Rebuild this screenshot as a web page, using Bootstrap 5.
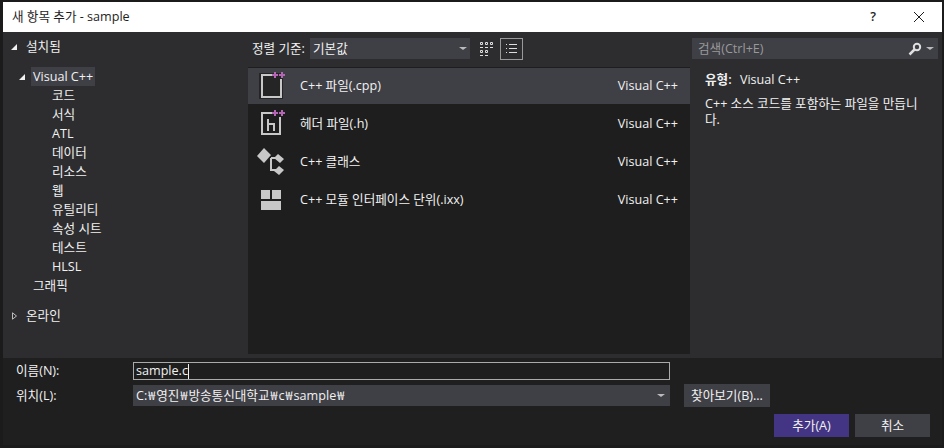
<!DOCTYPE html>
<html lang="ko">
<head>
    <meta charset="UTF-8">
    <title>새 항목 추가 - sample</title>
    <link href="https://cdn.jsdelivr.net/npm/bootstrap@5.3.0/dist/css/bootstrap.min.css" rel="stylesheet">
    <style>
        html, body { height: 448px; overflow: hidden; }
        body {
            background: #1b1b1c;
            color: #f1f1f1;
            font-family: "Open Sans", "Noto Sans CJK KR", sans-serif;
            font-size: 12.6px;
            line-height: 16px;
        }
        .dlg { width: 944px; height: 448px; padding: 2px 2px 3px 3px; }
        .title-strip { height: 30px; background: #fff; color: #1e1e1e; padding: 0 0 0 9px; }
        .title-btn { width: 46px; text-align: center; }
        .dlg-body { height: 326px; background: #2d2d30; }
        .side-pane { width: 245px; padding-top: 5px; }
        .mid-pane { width: 442px; }
        .info-pane { width: 252px; }
        .tree-head { height: 19px; padding-left: 7px; gap: 8px; }
        .tree-arrow { width: 8px; height: 8px; flex: none; }
        .tree-vc { padding-left: 15px; margin-top: 11px; margin-bottom: 2px; }
        .tree-sel { background: #3f3f46; padding: 0 2px; height: 19px; margin-left: 5px; }
        .tree-leaf { height: 19px; padding-left: 49px; }
        .tree-gfx { padding-left: 30px; }
        .tree-online { margin-top: 9px; }
        .sort-bar { height: 35px; padding: 6px 0 0 4px; }
        .sort-label { width: 58px; line-height: 21px; }
        .sort-select { width: 160px; height: 21px; background: #3f3f46; padding: 0 3px; }
        .caret-down { width: 0; height: 0; border-left: 4px solid transparent; border-right: 4px solid transparent; border-top: 3px solid #bbb; }
        .view-grid { width: 14px; height: 14px; margin: 4px 6px 0 10px; }
        .view-list { width: 23px; height: 22px; border: 1px solid #999; }
        .tpl-list { height: 287px; background: #1e1e1e; padding-top: 1px; }
        .tpl-row { height: 36px; margin-bottom: 2px; padding: 0 12px 0 9px; }
        .tpl-row.on { background: #3f3f46; }
        .tpl-ico { width: 28px; height: 28px; flex: none; margin-right: 15px; overflow: visible; }
        .search-box { height: 21px; background: #3f3f46; margin: 6px 4px 0 2px; color: #999; padding: 0 4px 0 6px; }
        .info-text { padding: 13px 10px 0 15px; }
        .info-text b { font-weight: 600; margin-right: 5px; }
        .foot { height: 87px; background: #1f1f1f; padding: 4px 12px 0 13px; }
        .foot-label { width: 117px; flex: none; }
        .name-input { width: 537px; height: 18px; border: 1px solid #aaa; background: #1e1e1e; padding: 0 2px; }
        .caret-bar { width: 1px; height: 15px; background: #f1f1f1; }
        .loc-row { margin-top: 4px; }
        .loc-input { width: 537px; height: 21px; background: #3f3f46; padding: 0 5px 0 3px; }
        .won { font-family: "Noto Sans CJK KR", sans-serif; margin: 0 1px; }
        .dlg-btn { background: #3f3f46; color: #f1f1f1; border: 0; border-radius: 0; font-size: 12.6px; line-height: 16px; padding: 0; }
        .dlg-btn.browse { width: 86px; height: 23px; margin-left: 14px; }
        .dlg-btn.wide { width: 75px; height: 23px; }
        .dlg-btn.primary-btn { background: #433584; }
        .btn-row { margin-top: 7px; gap: 6px; }
    </style>
</head>
<body>
<div class="dlg d-flex flex-column">
    <div class="title-strip d-flex align-items-center justify-content-between">
        <span>새 항목 추가 - sample</span>
        <div class="d-flex align-items-center">
            <span class="title-btn fw-semibold">?</span>
            <span class="title-btn d-flex justify-content-center">
                <svg width="12" height="12" viewBox="0 0 12 12"><path d="M1 1l10 10M11 1L1 11" stroke="#1e1e1e" fill="none"/></svg>
            </span>
        </div>
    </div>

    <div class="dlg-body d-flex">
        <div class="side-pane">
            <div class="tree-head d-flex align-items-center">
                <svg class="tree-arrow" viewBox="0 0 8 8"><path d="M7 1v6H1z" fill="#f1f1f1"/></svg>
                <span>설치됨</span>
            </div>
            <div class="tree-vc d-flex align-items-center">
                <svg class="tree-arrow" viewBox="0 0 8 8"><path d="M7 1v6H1z" fill="#f1f1f1"/></svg>
                <span class="tree-sel d-flex align-items-center">Visual C++</span>
            </div>
            <div class="tree-leaf">코드</div>
            <div class="tree-leaf">서식</div>
            <div class="tree-leaf">ATL</div>
            <div class="tree-leaf">데이터</div>
            <div class="tree-leaf">리소스</div>
            <div class="tree-leaf">웹</div>
            <div class="tree-leaf">유틸리티</div>
            <div class="tree-leaf">속성 시트</div>
            <div class="tree-leaf">테스트</div>
            <div class="tree-leaf">HLSL</div>
            <div class="tree-leaf tree-gfx">그래픽</div>
            <div class="tree-head tree-online d-flex align-items-center">
                <svg class="tree-arrow" viewBox="0 0 8 10" preserveAspectRatio="none"><path d="M2.5 1l4 4-4 4z" fill="none" stroke="#ccc"/></svg>
                <span>온라인</span>
            </div>
        </div>

        <div class="mid-pane d-flex flex-column">
            <div class="sort-bar d-flex align-items-start">
                <span class="sort-label">정렬 기준:</span>
                <div class="sort-select d-flex align-items-center justify-content-between">
                    <span>기본값</span>
                    <span class="caret-down"></span>
                </div>
                <svg class="view-grid" viewBox="0 0 14 14" fill="none" stroke="#ddd"><path d="M.5.5h2v2h-2zM5.5.5h2v2h-2zM10.5.5h2v2h-2zM0 5.5h3M5 5.5h3M10 5.5h3M.5 8.5h2v2h-2zM5.5 8.5h2v2h-2zM0 13.5h3M5 13.5h3"/></svg>
                <div class="view-list d-flex align-items-center justify-content-center">
                    <svg width="12" height="12" viewBox="0 0 12 12" fill="none" stroke="#ddd"><path d="M0 1.5h1M3 1.5h8M0 5.5h1M3 5.5h8M0 9.5h1M3 9.5h8"/></svg>
                </div>
            </div>
            <div class="tpl-list">
                <div class="tpl-row on d-flex align-items-center">
                    <svg class="tpl-ico" viewBox="0 0 28 28">
                        <path d="M2 1h24v26H2z" fill="#252526"/>
                        <path d="M15 3H5v22h19V7" fill="none" stroke="#c8c8c8" stroke-width="2"/>
                        <path d="M15 3h6M18 0v6M22 3h6M25 0v6" stroke="#b566b5" stroke-width="2"/>
                    </svg>
                    <span>C++ 파일(.cpp)</span>
                    <span class="ms-auto">Visual C++</span>
                </div>
                <div class="tpl-row d-flex align-items-center">
                    <svg class="tpl-ico" viewBox="0 0 28 28">
                        <path d="M15 3H5v21h18V7" fill="none" stroke="#c8c8c8" stroke-width="2"/>
                        <path d="M11 9v12M11 14h6v7" fill="none" stroke="#c8c8c8" stroke-width="2"/>
                        <path d="M15 3h6M18 0v6M22 3h6M25 0v6" stroke="#b566b5" stroke-width="2"/>
                    </svg>
                    <span>헤더 파일(.h)</span>
                    <span class="ms-auto">Visual C++</span>
                </div>
                <div class="tpl-row d-flex align-items-center">
                    <svg class="tpl-ico" viewBox="0 0 28 28">
                        <path d="M0 8l7-8 7 7-7 8zM17 10l4-4 6 5-4 4zM17 23l5-5 5 4-5 5z" fill="#c8c8c8"/>
                        <path d="M14 10v12h5M14 10h6" fill="none" stroke="#c8c8c8" stroke-width="2"/>
                    </svg>
                    <span>C++ 클래스</span>
                    <span class="ms-auto">Visual C++</span>
                </div>
                <div class="tpl-row d-flex align-items-center">
                    <svg class="tpl-ico" viewBox="0 0 28 28" fill="#c8c8c8">
                        <path d="M4 4h9v9H4zM15 4h9v9h-9zM4 15h20v9H4z"/>
                    </svg>
                    <span>C++ 모듈 인터페이스 단위(.ixx)</span>
                    <span class="ms-auto">Visual C++</span>
                </div>
            </div>
        </div>

        <div class="info-pane">
            <div class="search-box d-flex align-items-center justify-content-between">
                <span>검색(Ctrl+E)</span>
                <span class="d-flex align-items-center gap-1">
                    <svg width="14" height="14" viewBox="0 0 14 14" fill="none" stroke="#e0e0e0"><circle cx="9" cy="5" r="3.2" stroke-width="2"/><path d="M6.5 7.5L1.5 12.5" stroke-width="2.5"/></svg>
                    <span class="caret-down"></span>
                </span>
            </div>
            <div class="info-text">
                <div class="mb-1 pb-1"><b>유형:</b> Visual C++</div>
                <div>C++ 소스 코드를 포함하는 파일을 만듭니다.</div>
            </div>
        </div>
    </div>

    <div class="foot d-flex flex-column">
        <div class="d-flex align-items-center">
            <span class="foot-label">이름(N):</span>
            <div class="name-input d-flex align-items-center"><span>sample.c</span><span class="caret-bar"></span></div>
        </div>
        <div class="loc-row d-flex align-items-center">
            <span class="foot-label">위치(L):</span>
            <div class="loc-input d-flex align-items-center justify-content-between">
                <span>C:<span class="won">₩</span>영진<span class="won">₩</span>방송통신대학교<span class="won">₩</span>c<span class="won">₩</span>sample<span class="won">₩</span></span>
                <span class="caret-down"></span>
            </div>
            <button class="dlg-btn browse">찾아보기(B)...</button>
        </div>
        <div class="btn-row d-flex justify-content-end">
            <button class="dlg-btn wide primary-btn">추가(A)</button>
            <button class="dlg-btn wide">취소</button>
        </div>
    </div>
</div>
<script src="https://cdn.jsdelivr.net/npm/bootstrap@5.3.0/dist/js/bootstrap.bundle.min.js"></script>
</body>
</html>
